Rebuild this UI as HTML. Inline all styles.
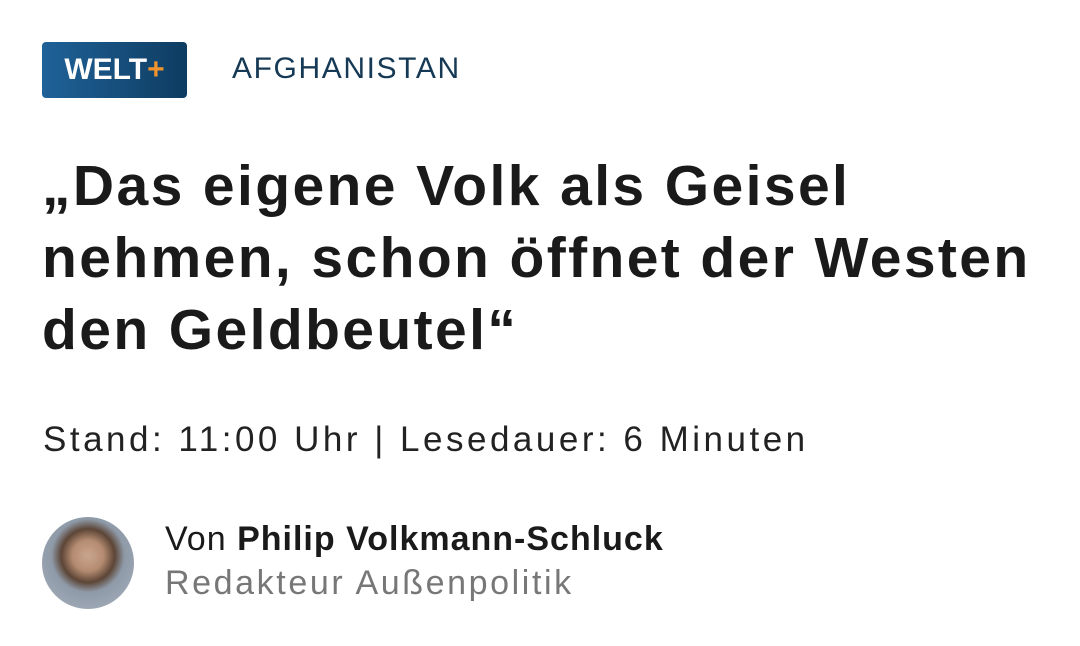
<!DOCTYPE html>
<html><head><meta charset="utf-8"><style>
body{margin:0;width:1080px;height:646px;background:#fff;font-family:"Liberation Sans",sans-serif;position:relative;overflow:hidden}
.logo{position:absolute;left:42px;top:42px;width:145px;height:56px;border-radius:4px;background:linear-gradient(90deg,#1f6298,#0e3c61);color:#fff;font-weight:bold;font-size:30px;line-height:56px;text-align:center}
.logo span{color:#f0922e}
.sec{position:absolute;left:232px;top:52px;font-size:30px;color:#163a55;letter-spacing:1.6px}
h1{position:absolute;left:42px;top:150px;margin:0;font-size:57px;line-height:72px;font-weight:bold;color:#1a1a1a;width:1040px;letter-spacing:2.4px;white-space:nowrap}
.stand{position:absolute;left:43px;top:420px;font-size:35px;color:#222;letter-spacing:3.5px}
.av{position:absolute;left:42px;top:517px;width:92px;height:92px;border-radius:50%;background:radial-gradient(circle at 50% 42%,#c9a58e 0,#b58c72 22%,#5c4536 38%,#8f9aa8 52%,#aab3c0 100%)}
.by{position:absolute;left:165px;top:520px;font-size:34px;color:#1a1a1a;letter-spacing:1px}
.role{position:absolute;left:165px;top:564px;font-size:34px;color:#777;letter-spacing:2.6px}
</style></head><body>
<div class="logo">WELT<span>+</span></div>
<div class="sec">AFGHANISTAN</div>
<h1>„Das eigene Volk als Geisel<br>nehmen, schon öffnet der Westen<br>den Geldbeutel“</h1>
<div class="stand">Stand: 11:00 Uhr | Lesedauer: 6 Minuten</div>
<div class="av"></div>
<div class="by">Von <b>Philip Volkmann-Schluck</b></div>
<div class="role">Redakteur Außenpolitik</div>
</body></html>
